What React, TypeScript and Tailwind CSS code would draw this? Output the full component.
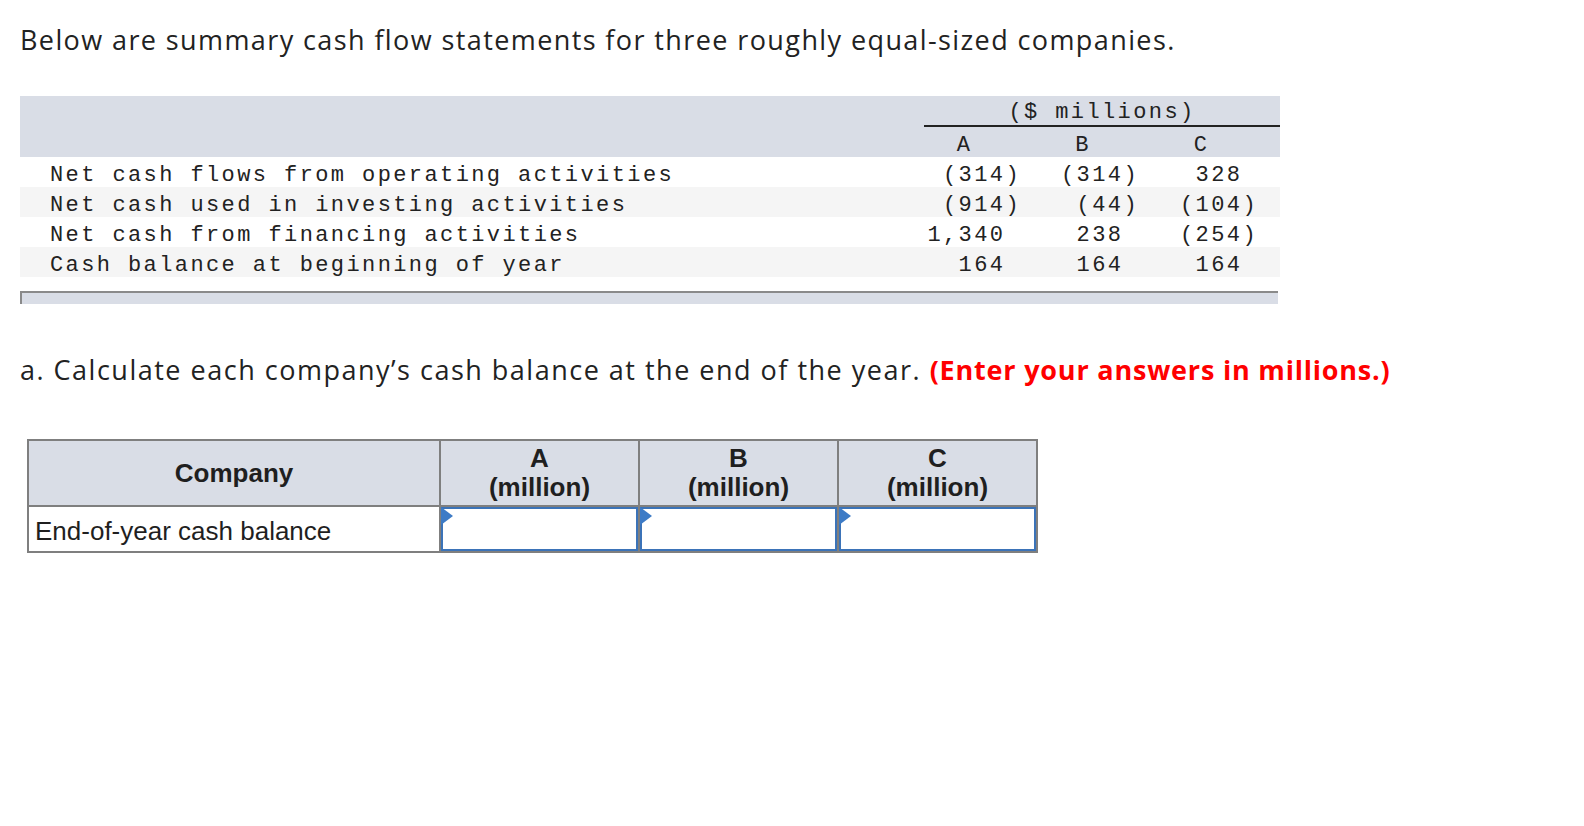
const rows = [
  { label: "Net cash flows from operating activities", a: "(314)", b: "(314)", c: "328 ", shade: false },
  { label: "Net cash used in investing activities", a: "(914)", b: "(44)", c: "(104)", shade: true },
  { label: "Net cash from financing activities", a: "1,340 ", b: "238 ", c: "(254)", shade: false },
  { label: "Cash balance at beginning of year", a: "164 ", b: "164 ", c: "164 ", shade: true },
];

const mono = "font-['Liberation_Mono','Courier_New',monospace] text-[22px] tracking-[2.4px] text-[#222]";
const sans = "font-['Open_Sans','Liberation_Sans',sans-serif]";
const arial = "font-['Liberation_Sans',Arial,sans-serif]";

function AnswerCell({ last }: { last?: boolean }) {
  return (
    <div className={`relative h-full ${last ? "w-[197px]" : "w-[199px] border-r-2 border-[#7f7f7f]"}`}>
      <input className="h-full w-full border-2 border-[#3b73b8] bg-white outline-none" />
      <span className="absolute left-0 top-0 h-0 w-0 border-b-[9px] border-l-[12px] border-t-[9px] border-b-transparent border-l-[#3d7bc6] border-t-transparent" />
    </div>
  );
}

export default function App() {
  return (
    <div className={`min-h-[826px] w-[1584px] bg-white pl-[20px] pt-[22px] ${sans}`}>
      <p className="text-[27px] leading-[36px] tracking-[1.4px] text-[#222]">
        Below are summary cash flow statements for three roughly equal-sized companies.
      </p>

      {/* statement table */}
      <div className={`mt-[38px] w-[1260px] ${mono}`}>
        <div className="flex h-[61px] bg-[#d9dde6]">
          <div className="flex-1" />
          <div className="flex w-[356px] flex-col">
            <div className="flex h-[29px] items-center justify-center pt-[5px] leading-[24px]">($ millions)</div>
            <div className="h-[2px] bg-[#222]" />
            <div className="flex h-[30px] items-center pt-[6px]">
              <span className="w-[119px] pr-[38px] text-center">A</span>
              <span className="w-[118px] pr-[38px] text-center">B</span>
              <span className="w-[119px] pr-[38px] text-center">C</span>
            </div>
          </div>
        </div>
        {rows.map((r) => (
          <div key={r.label} className={`flex h-[30px] items-center pt-[6px] ${r.shade ? "bg-[#f5f5f5]" : "bg-white"}`}>
            <span className="flex-1 pl-[30px]">{r.label}</span>
            <span className="w-[119px] whitespace-pre pr-[22px] text-right">{r.a}</span>
            <span className="w-[118px] whitespace-pre pr-[22px] text-right">{r.b}</span>
            <span className="w-[119px] whitespace-pre pr-[22px] text-right">{r.c}</span>
          </div>
        ))}
      </div>
      <div className="mt-[14px] h-[13px] w-[1258px] border-l-2 border-t-2 border-[#8a8a8a] bg-[#d9dde6]" />

      <p className="mt-[48px] text-[27px] leading-[36px] tracking-[1.5px] text-[#222]">
        a. Calculate each company’s cash balance at the end of the year.{" "}
        <span className="font-bold tracking-[0.8px] text-[#f00]">(Enter your answers in millions.)</span>
      </p>

      {/* answer table */}
      <div className={`ml-[7px] mt-[51px] w-[1011px] border-2 border-[#7f7f7f] text-[26px] text-[#1f1f1f] ${arial}`}>
        <div className="flex h-[66px] border-b-2 border-[#7f7f7f] bg-[#d9dde6] font-bold leading-[29px]">
          <div className="flex w-[412px] items-center justify-center border-r-2 border-[#7f7f7f]">Company</div>
          <div className="flex w-[199px] flex-col items-center justify-center border-r-2 border-[#7f7f7f]">
            <span>A</span>
            <span>(million)</span>
          </div>
          <div className="flex w-[199px] flex-col items-center justify-center border-r-2 border-[#7f7f7f]">
            <span>B</span>
            <span>(million)</span>
          </div>
          <div className="flex w-[197px] flex-col items-center justify-center">
            <span>C</span>
            <span>(million)</span>
          </div>
        </div>
        <div className="flex h-[44px]">
          <div className="flex w-[412px] items-center border-r-2 border-[#7f7f7f] pl-[6px] pt-[4px]">End-of-year cash balance</div>
          <AnswerCell />
          <AnswerCell />
          <AnswerCell last />
        </div>
      </div>
    </div>
  );
}
